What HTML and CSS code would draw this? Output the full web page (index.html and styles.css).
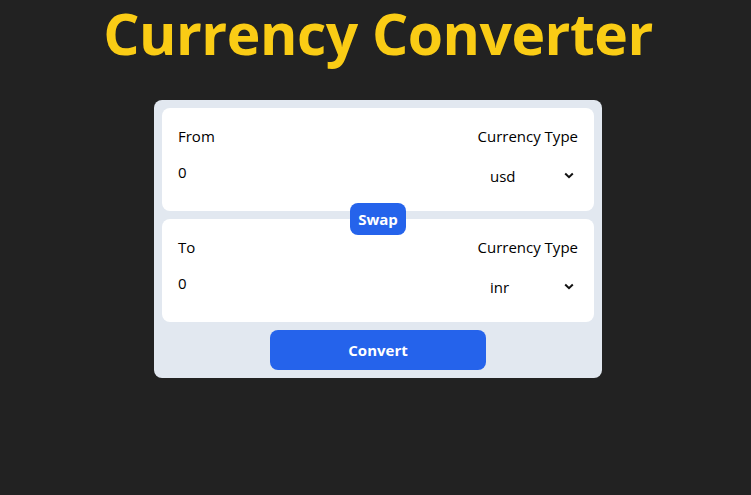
FILE: index.html
```html
<!DOCTYPE html>
<html lang="en">
<head>
<meta charset="utf-8">
<title>Currency Converter</title>
<link rel="stylesheet" href="styles.css">
</head>
<body>
<main class="page">
  <h1 class="title">Currency Converter</h1>
  <form class="card">
    <div class="panels">
      <div class="panel">
        <div class="col">
          <label class="label">From</label>
          <input class="amount" type="text" value="0">
        </div>
        <div class="col col-right">
          <p class="label">Currency Type</p>
          <div class="select-wrap">
            <select class="select"><option>usd</option></select>
            <svg class="chev" width="10" height="7" viewBox="0 0 10 7"><path d="M1.2 1.5 L5 5.2 L8.8 1.5" fill="none" stroke="#111" stroke-width="2"/></svg>
          </div>
        </div>
      </div>
      <button type="button" class="swap">Swap</button>
      <div class="panel">
        <div class="col">
          <label class="label">To</label>
          <input class="amount" type="text" value="0">
        </div>
        <div class="col col-right">
          <p class="label">Currency Type</p>
          <div class="select-wrap">
            <select class="select"><option>inr</option></select>
            <svg class="chev" width="10" height="7" viewBox="0 0 10 7"><path d="M1.2 1.5 L5 5.2 L8.8 1.5" fill="none" stroke="#111" stroke-width="2"/></svg>
          </div>
        </div>
      </div>
    </div>
    <button type="button" class="convert">Convert</button>
  </form>
</main>
</body>
</html>
```

FILE: styles.css
```css
* { box-sizing: border-box; }
html, body { margin: 0; padding: 0; }
body {
  background: #222222;
  font-family: "Open Sans", "Noto Sans", sans-serif;
  color: #000;
}
.page {
  display: flex;
  flex-direction: column;
  align-items: center;
  padding-left: 5px;
}
.title {
  margin: 0;
  padding-top: 3px;
  font-size: 57px;
  line-height: 60px;
  font-weight: 700;
  color: #facc15;
  letter-spacing: -0.5px;
}
.card {
  margin-top: 37px;
  width: 448px;
  background: #e2e8f0;
  border-radius: 8px;
  padding: 8px;
  display: flex;
  flex-direction: column;
  align-items: center;
  gap: 8px;
}
.panels {
  position: relative;
  width: 100%;
  display: flex;
  flex-direction: column;
  gap: 8px;
}
.panel {
  background: #fff;
  border-radius: 8px;
  padding: 16px;
  height: 103px;
  display: flex;
  font-size: 15px;
}
.col { width: 50%; display: flex; flex-direction: column; }
.col-right { align-items: flex-end; }
.label {
  margin: 0 0 8px 0;
  line-height: 24px;
  font-size: 15px;
}
.amount {
  border: none;
  outline: none;
  background: transparent;
  font: inherit;
  font-size: 15px;
  height: 32px;
  padding: 0;
  width: 100%;
  color: #000;
}
.select-wrap { position: relative; width: 100px; }
.select {
  appearance: none;
  -webkit-appearance: none;
  border: none;
  outline: none;
  background: #fff;
  font: inherit;
  font-size: 15px;
  width: 100px;
  height: 39px;
  padding: 0 0 0 12px;
  color: #000;
}
.chev {
  position: absolute;
  right: 4px;
  top: 16px;
  pointer-events: none;
}
.swap {
  position: absolute;
  left: 50%;
  top: 95px;
  transform: translateX(-50%);
  width: 56px;
  height: 32px;
  border: none;
  border-radius: 8px;
  background: #2563eb;
  color: #fff;
  font: inherit;
  font-size: 15px;
  font-weight: 700;
  padding: 0;
}
.convert {
  width: 216px;
  height: 40px;
  border: none;
  border-radius: 8px;
  background: #2563eb;
  color: #fff;
  font: inherit;
  font-size: 15px;
  font-weight: 700;
}
```
